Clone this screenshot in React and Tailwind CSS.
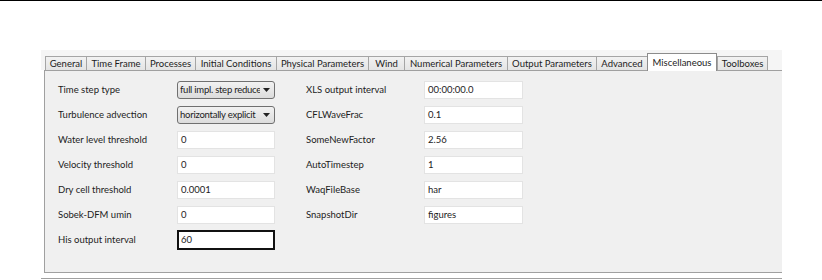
import React from "react";

const tabs = [
  ["General", 41],
  ["Time Frame", 59],
  ["Processes", 50],
  ["Initial Conditions", 81],
  ["Physical Parameters", 92],
  ["Wind", 36],
  ["Numerical Parameters", 103],
  ["Output Parameters", 89],
  ["Advanced", 51],
  ["Miscellaneous", 70],
  ["Toolboxes", 51],
];

const left = [
  ["Time step type", "select", "full impl. step reduced"],
  ["Turbulence advection", "select", "horizontally explicit"],
  ["Water level threshold", "input", "0"],
  ["Velocity threshold", "input", "0"],
  ["Dry cell threshold", "input", "0.0001"],
  ["Sobek-DFM umin", "input", "0"],
  ["His output interval", "focus", "60"],
];

const right = [
  ["XLS output interval", "00:00:00.0"],
  ["CFLWaveFrac", "0.1"],
  ["SomeNewFactor", "2.56"],
  ["AutoTimestep", "1"],
  ["WaqFileBase", "har"],
  ["SnapshotDir", "figures"],
];

function Field({ kind, value, w }) {
  if (kind === "select") {
    return (
      <div
        className={`${w} h-[18px] flex items-center rounded-[3px] border border-[#707070] bg-gradient-to-b from-[#f2f2f2] to-[#dcdcdc] pl-[2px] pr-[4px]`}
      >
        <span className="whitespace-nowrap overflow-hidden flex-1 min-w-0 tracking-[-0.25px]">{value}</span>
        <svg width="7" height="4" viewBox="0 0 7 4" className="shrink-0 ml-[3px]">
          <path d="M0 0H7L3.5 4Z" fill="#222" />
        </svg>
      </div>
    );
  }
  if (kind === "focus") {
    return (
      <div className={`${w} h-[20px] flex items-center border-2 border-[#111] bg-white pl-[2px]`}>
        {value}
      </div>
    );
  }
  return (
    <div className={`${w} h-[18px] flex items-center border border-[#e3e3e3] bg-white pl-[3px]`}>
      {value}
    </div>
  );
}

export default function App() {
  return (
    <div
      className="w-[822px] h-[280px] bg-white flex flex-col text-[9.5px] text-[#1c1c1c] overflow-hidden"
      style={{ fontFamily: 'Lato, "Open Sans", sans-serif' }}
    >
      <div className="h-px bg-black shrink-0" />
      <div className="ml-[41px] mt-[49px] w-[741px] flex flex-col">
        <div className="bg-[#f5f5f5] flex items-end pl-[4px] pt-[2px] h-[20px]">
          {tabs.map(([name, w]) => {
            const sel = name === "Miscellaneous";
            return sel ? (
              <div
                key={name}
                className="h-[18px] bg-white border border-b-0 border-[#8c8c8c] flex items-start justify-center pt-[2px] -mb-px relative z-10 whitespace-nowrap shrink-0"
                style={{ width: w }}
              >
                {name}
              </div>
            ) : (
              <div
                key={name}
                className="h-[14px] bg-gradient-to-b from-[#f2f2f2] to-[#e4e4e4] border border-b-0 border-[#a5a5a5] border-r-0 last:border-r flex items-center justify-center whitespace-nowrap leading-none shrink-0 overflow-hidden"
                style={{ width: w }}
              >
                {name}
              </div>
            );
          })}
        </div>
        <div className="ml-[3px] h-[203px] bg-[#f0f0f0] border-l border-t border-b border-[#a0a0a0] pt-[10px] pl-[13px] flex">
          <div className="flex flex-col gap-[7px] w-[248px]">
            {left.map(([label, kind, value]) => (
              <div key={label} className={`flex items-center ${kind === "focus" ? "h-[20px] -mt-px" : "h-[18px]"}`}>
                <div className="w-[119px] whitespace-nowrap">{label}</div>
                <Field kind={kind} value={value} w="w-[98px]" />
              </div>
            ))}
          </div>
          <div className="flex flex-col gap-[7px]">
            {right.map(([label, value]) => (
              <div key={label} className="flex items-center h-[18px]">
                <div className="w-[118px] whitespace-nowrap">{label}</div>
                <Field kind="input" value={value} w="w-[99px]" />
              </div>
            ))}
          </div>
        </div>
        <div className="h-[5px]" />
        <div className="h-px bg-[#a0a0a0]" />
      </div>
    </div>
  );
}
